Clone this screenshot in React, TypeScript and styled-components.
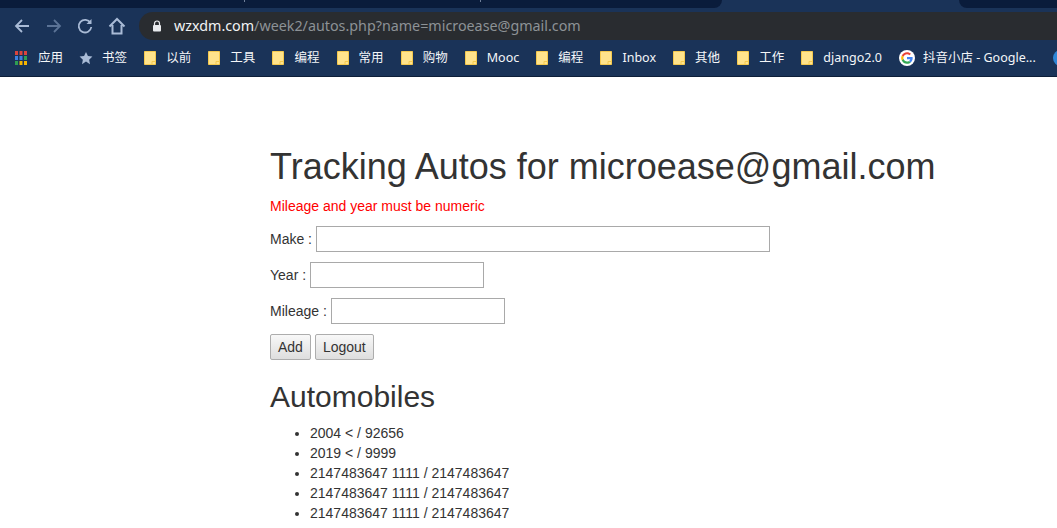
import styled, { createGlobalStyle } from "styled-components";

const GlobalStyle = createGlobalStyle`
  html, body {
    margin: 0;
    padding: 0;
    background: #fff;
    overflow: hidden;
  }
`;

const Page = styled.div`
  width: 1057px;
  height: 528px;
  overflow: hidden;
  font-family: "Liberation Sans", Arial, sans-serif;
  font-size: 14px;
  line-height: 20px;
  color: #333;
`;

const Chrome = styled.header`
  background: #1a3358;
  border-bottom: 1px solid #0d1e38;
  height: 77px;
  box-sizing: border-box;
  font-family: "Noto Sans", "Noto Sans CJK SC", sans-serif;
`;

const TabStrip = styled.div`
  height: 8px;
  display: flex;
  background: #1a3358;
`;

const InactiveTab = styled.div<{ $width: number; $grow?: boolean }>`
  width: ${(p) => p.$width}px;
  flex: ${(p) => (p.$grow ? 1 : "none")};
  display: flex;
  background: #0a1c3b;
  border-bottom-left-radius: ${(p) => (p.$grow ? 8 : 0)}px;
  border-bottom-right-radius: ${(p) => (p.$grow ? 0 : 8)}px;
`;

const TabDivider = styled.span<{ $left: number }>`
  width: 1px;
  height: 2px;
  margin-left: ${(p) => p.$left}px;
  background: #6f7f99;
`;

const ActiveGap = styled.div`
  width: 237px;
`;

const Toolbar = styled.div`
  height: 28px;
  margin-top: 4px;
  display: flex;
  align-items: center;
  padding-left: 13px;
`;

const NavButton = styled.button<{ $gap: number }>`
  width: 18px;
  height: 18px;
  padding: 0;
  margin-right: ${(p) => p.$gap}px;
  border: none;
  background: none;
  display: flex;
`;

const Omnibox = styled.div`
  flex: 1;
  height: 28px;
  margin-left: 13px;
  display: flex;
  align-items: center;
  background: #292c30;
  border-radius: 14px 0 0 14px;
  padding-left: 13px;
  font-size: 14.3px;
  white-space: nowrap;
`;

const LockIcon = styled.svg`
  width: 10px;
  height: 12px;
  margin-right: 12px;
`;

const Host = styled.span`
  color: #f1f3f4;
`;

const UrlRest = styled.span`
  color: #8d9296;
`;

const Bookmarks = styled.nav`
  height: 35px;
  display: flex;
  align-items: center;
  padding-left: 15px;
  gap: 17.1px;
  font-size: 12.5px;
  color: #f4f6f8;
  white-space: nowrap;
  overflow: hidden;
`;

const Bookmark = styled.a<{ $gap?: number }>`
  display: flex;
  align-items: center;
  gap: ${(p) => p.$gap ?? 10}px;
  flex: none;
`;

const StarIcon = styled.svg`
  width: 14px;
  height: 14px;
  margin: 0 -1px;
`;

const Main = styled.main`
  padding: 70px 0 0 270px;
`;

const Title = styled.h1`
  margin: 0 0 9px;
  font-size: 36px;
  font-weight: 500;
  line-height: 40px;
`;

const ErrorText = styled.p`
  margin: 0 0 10px;
  color: #f00;
`;

const Field = styled.p`
  margin: 0 0 10px;
  height: 26px;
  display: flex;
  align-items: center;
  gap: 4px;
`;

const Input = styled.input<{ $width: number }>`
  width: ${(p) => p.$width}px;
  height: 26px;
  box-sizing: border-box;
  border: 1px solid #a9a9a9;
  background: #fff;
  padding: 1px 2px;
`;

const Actions = styled.p`
  margin: 0;
  display: flex;
  gap: 4px;
`;

const Button = styled.button`
  height: 26px;
  padding: 0 7px;
  box-sizing: border-box;
  border: 1px solid #adadad;
  border-radius: 2px;
  background: linear-gradient(#f8f8f8, #dedede);
  color: #333;
  font: 14px "Liberation Sans", Arial, sans-serif;
`;

const Subtitle = styled.h2`
  margin: 20px 0 10px;
  font-size: 30px;
  font-weight: 500;
  line-height: 33px;
`;

const CarList = styled.ul`
  margin: 0;
  padding-left: 40px;
`;

const folders = [
  "以前",
  "工具",
  "编程",
  "常用",
  "购物",
  "Mooc",
  "编程",
  "Inbox",
  "其他",
  "工作",
  "django2.0",
];

const cars = [
  "2004 < / 92656",
  "2019 < / 9999",
  "2147483647 1111 / 2147483647",
  "2147483647 1111 / 2147483647",
  "2147483647 1111 / 2147483647",
];

const appColors = [
  "#d9453c", "#d9453c", "#d9453c",
  "#3d82e0", "#3d82e0", "#2f9e53",
  "#2f9e53", "#f6b400", "#f6b400",
];

const Folder = () => (
  <svg width="12" height="14" viewBox="0 0 12 14">
    <path d="M.5.5h11v13H.5z" fill="#ffe38c" stroke="#f5c94e" />
    <path d="M8 13.5V10.500h3.500" fill="none" stroke="#f5c94e" />
  </svg>
);

const Apps = () => (
  <svg width="12" height="14" viewBox="0 0 12 14">
    {appColors.map((c, i) => (
      <rect key={i} x={(i % 3) * 4.5} y={Math.floor(i / 3) * 5} width="3" height="4" fill={c} />
    ))}
  </svg>
);

const GoogleIcon = () => (
  <svg width="16" height="16" viewBox="0 0 48 48">
    <circle cx="24" cy="24" r="24" fill="#fff" />
    <path fill="#ea4335" d="M24 13c3 0 5.400 1.100 7.300 2.800l4.700-4.700C33 8.400 28.900 6.500 24 6.500c-6.900 0-12.800 3.900-15.700 9.700l5.500 4.300C15.200 16.200 19.200 13 24 13z" />
    <path fill="#4285f4" d="M41 24.500c0-1.300-.1-2.300-.3-3.300H24v6.400h9.600c-.4 2.200-1.700 4.200-3.700 5.500l5.400 4.200C38.700 33.800 41 29.600 41 24.500z" />
    <path fill="#fbbc05" d="M13.800 27.500c-.4-1.100-.6-2.300-.6-3.500s.2-2.400.6-3.500l-5.500-4.300C7.200 18.600 6.500 21.200 6.500 24s.7 5.400 1.800 7.800l5.500-4.300z" />
    <path fill="#34a853" d="M24 41.500c4.700 0 8.700-1.500 11.300-4.200l-5.400-4.200c-1.500 1-3.400 1.700-5.900 1.700-4.800 0-8.800-3.200-10.200-7.500l-5.500 4.300c2.900 5.800 8.800 9.900 15.700 9.900z" />
  </svg>
);

const App = () => (
  <Page>
    <GlobalStyle />
    <Chrome>
      <TabStrip>
        <InactiveTab $width={722}>
          <TabDivider $left={244} />
          <TabDivider $left={235} />
        </InactiveTab>
        <ActiveGap />
        <InactiveTab $width={0} $grow />
      </TabStrip>
      <Toolbar>
        <NavButton $gap={14}>
          <svg width="18" height="18" viewBox="0 0 18 18" fill="none" stroke="#a9bbd6" strokeWidth="1.800">
            <path d="M16 9H3M9 3L3 9l6 6" />
          </svg>
        </NavButton>
        <NavButton $gap={13}>
          <svg width="18" height="18" viewBox="0 0 18 18" fill="none" stroke="#5b7396" strokeWidth="1.800">
            <path d="M2 9h13M9 3l6 6-6 6" />
          </svg>
        </NavButton>
        <NavButton $gap={14}>
          <svg width="18" height="18" viewBox="0 0 18 18" fill="none" stroke="#a9bbd6" strokeWidth="1.800">
            <path d="M14.500 6A6.300 6.300 0 1 0 15.300 10" />
            <path d="M15.500 2v5h-5" fill="#a9bbd6" stroke="none" />
          </svg>
        </NavButton>
        <NavButton $gap={0}>
          <svg width="18" height="18" viewBox="0 0 18 18" fill="none" stroke="#a9bbd6" strokeWidth="2">
            <path d="M1.500 9.500L9 2l7.500 7.500M4.500 8v8.500h9V8" />
          </svg>
        </NavButton>
        <Omnibox>
          <LockIcon viewBox="0 0 10 12">
            <path d="M2.500 5V3.500a2.500 2.500 0 0 1 5 0V5" fill="none" stroke="#e8eaed" strokeWidth="1.200" />
            <rect x="1" y="5" width="8" height="6.500" rx="1" fill="#e8eaed" />
          </LockIcon>
          <Host>wzxdm.com</Host>
          <UrlRest>/week2/autos.php?name=microease@gmail.com</UrlRest>
        </Omnibox>
      </Toolbar>
      <Bookmarks>
        <Bookmark $gap={11}>
          <Apps />
          应用
        </Bookmark>
        <Bookmark>
          <StarIcon viewBox="0 0 24 24" fill="#a9bbd6">
            <path d="M12 1.500l3.300 7 7.700 1-5.600 5.300 1.400 7.700L12 18l-6.800 4.500 1.400-7.700L1 9.500l7.700-1z" />
          </StarIcon>
          书签
        </Bookmark>
        {folders.map((name, i) => (
          <Bookmark key={i}>
            <Folder />
            {name}
          </Bookmark>
        ))}
        <Bookmark $gap={8}>
          <GoogleIcon />
          抖音小店 - Google...
        </Bookmark>
        <Bookmark>
          <svg width="16" height="16" viewBox="0 0 16 16">
            <circle cx="8" cy="8" r="8" fill="#2f86d6" />
          </svg>
        </Bookmark>
      </Bookmarks>
    </Chrome>
    <Main>
      <Title>Tracking Autos for microease@gmail.com</Title>
      <ErrorText>Mileage and year must be numeric</ErrorText>
      <form>
        <Field>
          Make : <Input type="text" $width={454} />
        </Field>
        <Field>
          Year : <Input type="text" $width={174} />
        </Field>
        <Field>
          Mileage : <Input type="text" $width={174} />
        </Field>
        <Actions>
          <Button type="button">Add</Button>
          <Button type="button">Logout</Button>
        </Actions>
      </form>
      <Subtitle>Automobiles</Subtitle>
      <CarList>
        {cars.map((car, i) => (
          <li key={i}>{car}</li>
        ))}
      </CarList>
    </Main>
  </Page>
);

export default App;
